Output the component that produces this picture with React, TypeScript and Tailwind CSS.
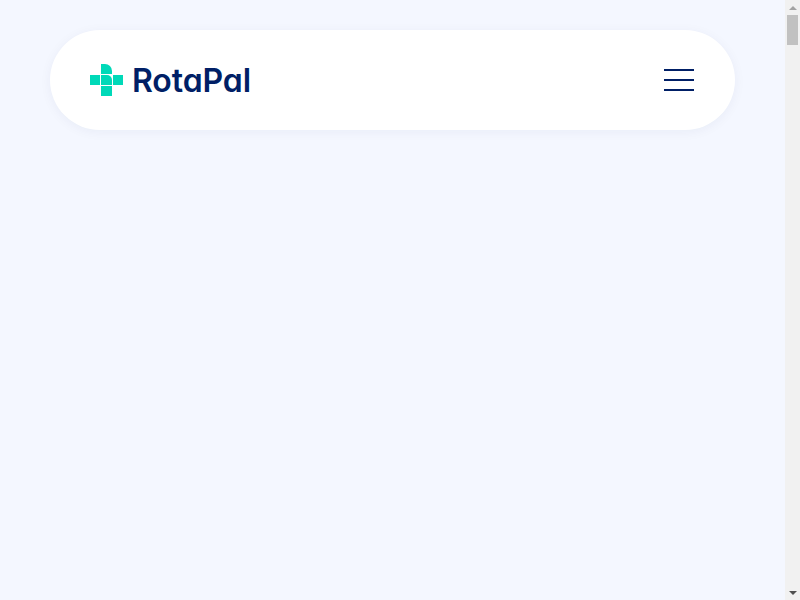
function Logo() {
  return (
    <svg width="33" height="32" viewBox="0 0 33 32" className="shrink-0">
      <g fill="#00d9b8">
        <path d="M11 0h4a7 7 0 0 1 7 7v3H11z" />
        <path d="M0 11h10v10H0z" />
        <path d="M11 11h6a5 5 0 0 1 5 5v5H11z" />
        <path d="M23 11h10v10H23z" />
        <path d="M11 22h11v10H11z" />
      </g>
    </svg>
  );
}

// headless browser hides the native bar, so it is drawn here
function Scrollbar() {
  return (
    <div className="flex h-full w-[15px] shrink-0 flex-col items-center bg-[#f1f1f1]">
      <div className="flex h-[15px] items-center justify-center">
        <div className="border-x-[4px] border-b-[4px] border-x-transparent border-b-[#a3a3a3]" />
      </div>
      <div className="h-[30px] w-[11px] bg-[#c1c1c1]" />
      <div className="flex-1" />
      <div className="flex h-[15px] items-center justify-center">
        <div className="border-x-[4px] border-t-[4px] border-x-transparent border-t-[#505050]" />
      </div>
    </div>
  );
}

export default function App() {
  return (
    <div className="flex h-screen overflow-hidden">
      <main className="flex-1 bg-[#f4f7ff] pt-[30px] pl-[50px]">
        <header className="flex h-[100px] w-[685px] items-center justify-between rounded-[50px] bg-white pr-[41px] pl-[40px] shadow-[0_2px_12px_rgba(0,30,100,0.05)]">
          <a href="#" className="flex items-center gap-[9px]">
            <Logo />
            <span className="mt-[2px] font-['Inter',sans-serif] text-[32px] leading-none font-semibold tracking-[-0.1px] text-[#001f66] [font-feature-settings:'cv11']">
              RotaPal
            </span>
          </a>
          <button type="button" aria-label="Menu" className="flex w-[30px] flex-col gap-[8px]">
            <span className="h-[2px] bg-[#001f66]" />
            <span className="h-[2px] bg-[#001f66]" />
            <span className="h-[2px] bg-[#001f66]" />
          </button>
        </header>
      </main>
      <Scrollbar />
    </div>
  );
}
